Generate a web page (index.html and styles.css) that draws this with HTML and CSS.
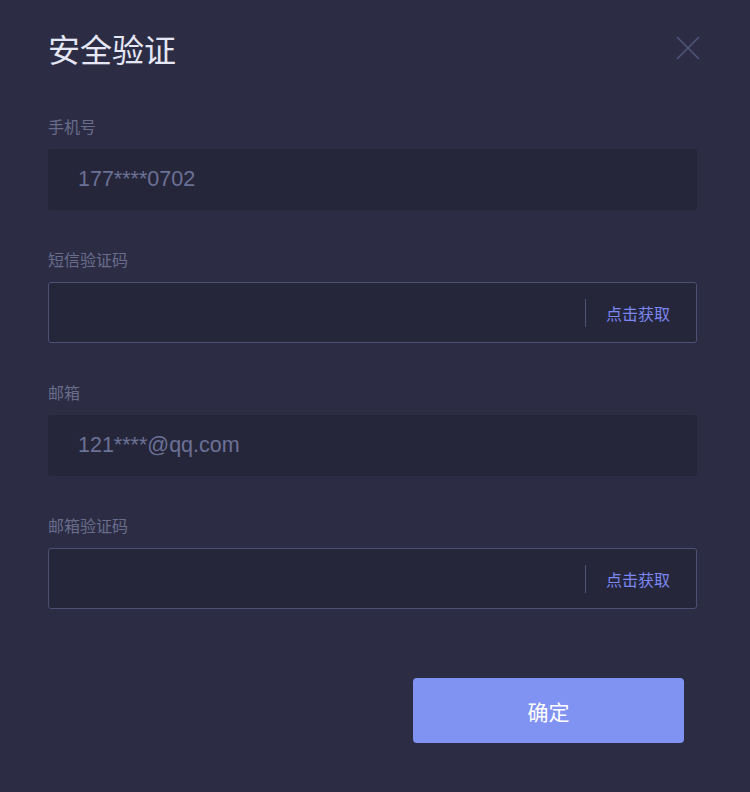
FILE: index.html
```html
<!DOCTYPE html>
<html lang="zh-CN">
<head>
<meta charset="utf-8">
<title>安全验证</title>
<link rel="stylesheet" href="styles.css">
</head>
<body>
<div class="dialog">
  <div class="header">
    <h1 class="title">安全验证</h1>
    <button class="close" aria-label="关闭">
      <svg width="24" height="24" viewBox="0 0 24 24"><path d="M1 1L23 23M23 1L1 23" stroke="#50557a" stroke-width="1.6" fill="none"/></svg>
    </button>
  </div>
  <div class="field">
    <div class="label">手机号</div>
    <div class="input filled"><span class="value">177****0702</span></div>
  </div>
  <div class="field">
    <div class="label">短信验证码</div>
    <div class="input bordered"><span class="grow"></span><span class="divider"></span><span class="get">点击获取</span></div>
  </div>
  <div class="field">
    <div class="label">邮箱</div>
    <div class="input filled"><span class="value">121****@qq.com</span></div>
  </div>
  <div class="field">
    <div class="label">邮箱验证码</div>
    <div class="input bordered"><span class="grow"></span><span class="divider"></span><span class="get">点击获取</span></div>
  </div>
  <div class="actions">
    <button class="confirm">确定</button>
  </div>
</div>
</body>
</html>
```
FILE: styles.css
```css
html, body {
  margin: 0;
  padding: 0;
  background: #2c2d44;
  width: 750px;
  height: 792px;
  overflow: hidden;
  font-family: "Liberation Sans", "Noto Sans CJK SC", sans-serif;
}
.dialog {
  padding: 28px 53px 0 48px;
}
.header {
  display: flex;
  justify-content: space-between;
  align-items: center;
  height: 40px;
}
.title {
  margin: 0;
  font-size: 32px;
  line-height: 40px;
  font-weight: normal;
  color: #e6e7f6;
  font-family: "Noto Sans CJK SC", sans-serif;
}
.close {
  background: none;
  border: 0;
  padding: 0;
  width: 24px;
  height: 24px;
  margin-right: -3px;
  display: flex;
}
.field {
  display: flex;
  flex-direction: column;
}
.header + .field { margin-top: 48px; }
.field + .field { margin-top: 39px; }
.label {
  font-size: 16px;
  line-height: 20px;
  color: #696c8b;
  font-family: "Noto Sans CJK SC", sans-serif;
  margin-bottom: 13px;
}
.input {
  height: 61px;
  box-sizing: border-box;
  border-radius: 3px;
  display: flex;
  align-items: center;
}
.filled {
  background: #25263a;
  padding-left: 30px;
}
.bordered {
  background: #25263a;
  border: 1px solid #4d5072;
  padding-right: 26px;
}
.value {
  font-size: 21.5px;
  color: #6c7196;
}
.grow { flex: 1; }
.divider {
  width: 1px;
  height: 28px;
  background: #4e5274;
  margin-right: 20px;
}
.get {
  font-size: 16px;
  color: #7c87f3;
  font-family: "Noto Sans CJK SC", sans-serif;
}
.actions {
  display: flex;
  justify-content: flex-end;
  margin-top: 69px;
  padding-right: 13px;
}
.confirm {
  width: 271px;
  height: 65px;
  border: 0;
  border-radius: 4px;
  background: #8193f2;
  color: #ffffff;
  font-size: 21px;
  font-family: "Noto Sans CJK SC", sans-serif;
}
```
